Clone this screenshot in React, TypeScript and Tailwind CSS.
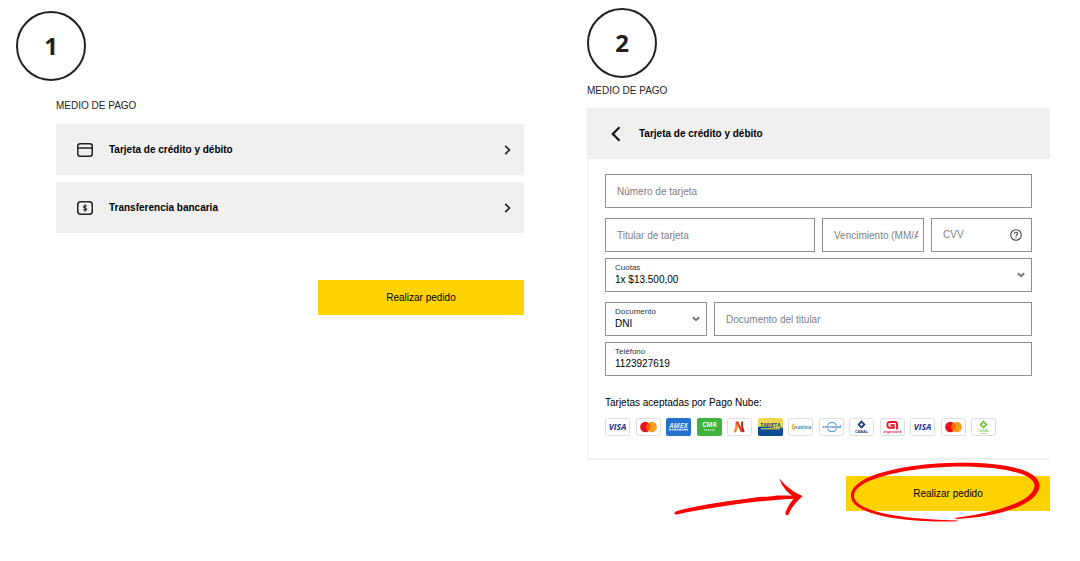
import { useState } from 'react';
import type { ReactNode } from 'react';

const fieldBox = 'h-[34px] border border-[#8f8f8f] bg-white';
const textInput =
  'w-full min-w-0 rounded-none pl-[11px] pr-[5px] text-[10px] leading-[14px] text-black placeholder:text-[#808080] outline-none';

function StepBadge({ step }: { step: number }) {
  return (
    <div className="flex size-[70px] items-center justify-center rounded-full border-2 border-[#231f20] font-['Open_Sans',sans-serif] text-2xl font-bold text-[#231f20]">
      {step}
    </div>
  );
}

function CardIcon() {
  return (
    <svg width="16" height="14" viewBox="0 0 16 14" fill="none" stroke="#222" strokeWidth="1.5">
      <rect x="0.75" y="0.75" width="14.5" height="12.5" rx="2.5" />
      <path d="M1 5h14" />
    </svg>
  );
}

function TransferIcon() {
  return (
    <svg width="16" height="14" viewBox="0 0 16 14" fill="none" stroke="#222" strokeWidth="1.5">
      <rect x="0.75" y="0.75" width="14.5" height="12.5" rx="3" />
      <path d="M9.6 5.2C9.2 4.5 6.6 4.3 6.6 5.8c0 1.4 3 .9 3 2.4 0 1.4-2.7 1.3-3.2.4M8 3.4v7.2" strokeWidth="1.1" />
    </svg>
  );
}

function ChevronRight() {
  return (
    <svg width="7" height="10" viewBox="0 0 7 10" fill="none" stroke="#222" strokeWidth="1.7">
      <path d="M1.2 0.8 5.4 5 1.2 9.2" />
    </svg>
  );
}

function SelectArrow() {
  return (
    <svg
      className="pointer-events-none absolute right-[6px] top-1/2 -translate-y-1/2"
      width="8"
      height="6"
      viewBox="0 0 8 6"
      fill="none"
      stroke="#777"
      strokeWidth="2"
    >
      <path d="M0.8 1.2 4 4.2 7.2 1.2" />
    </svg>
  );
}

function LabeledField({ id, label, children }: { id: string; label: string; children: ReactNode }) {
  return (
    <div className={`${fieldBox} relative flex flex-col pl-[9px] pt-1`}>
      <label htmlFor={id} className="text-[8px] leading-[10px] text-[#333]">
        {label}
      </label>
      {children}
    </div>
  );
}

function PaymentOption({ icon, label }: { icon: ReactNode; label: string }) {
  return (
    <button type="button" className="flex h-[51px] w-full items-center bg-[#f0f0f0] pl-[21px] pr-[13px] text-left">
      {icon}
      <span className="ml-4 flex-1 text-[10px] font-bold text-black">{label}</span>
      <ChevronRight />
    </button>
  );
}

const logos: Record<string, ReactNode> = {
  visa: (
    <text x="12.5" y="12" textAnchor="middle" fontSize="8.5" fontWeight="bold" fontStyle="italic" fill="#1f2f86">
      VISA
    </text>
  ),
  mastercard: (
    <>
      <circle cx="9.3" cy="9" r="5.2" fill="#eb101b" />
      <circle cx="15.7" cy="9" r="5.2" fill="#f79e1b" />
      <path d="M12.5 4.9a5.2 5.2 0 0 1 0 8.2a5.2 5.2 0 0 1 0-8.2" fill="#ff5f00" />
    </>
  ),
  amex: (
    <>
      <rect width="25" height="18" rx="2" fill="#2470ce" />
      <text x="12.5" y="10" textAnchor="middle" fontSize="7" fontWeight="bold" fontStyle="italic" fill="#d5e8ff">
        AMEX
      </text>
      <path d="M3 11.6h19" stroke="#cfe3fb" strokeWidth="1.6" strokeDasharray="2 0.5" />
    </>
  ),
  cmr: (
    <>
      <rect width="25" height="18" rx="2" fill="#3fb43c" />
      <text x="12.5" y="9.4" textAnchor="middle" fontSize="6.5" fontWeight="bold" fill="#e9f9e4">
        CMR
      </text>
      <path d="M7 12h11" stroke="#b5e5b0" strokeWidth="1.4" strokeDasharray="1.4 0.5" />
    </>
  ),
  naranja: (
    <>
      <path d="M7.6 14c1.8-2.6 2.2-6 1.8-9.5" fill="none" stroke="#f08322" strokeWidth="2.2" />
      <path d="M8.6 3.4 11 3.2 16.6 14h-2.8Z" fill="#dd4024" />
      <path d="M15 3.6c-.4 4 .1 7 1.8 10.4" fill="none" stroke="#b62b26" strokeWidth="2" />
    </>
  ),
  shopping: (
    <>
      <rect width="25" height="18" rx="2" fill="#f0d651" />
      <path d="M0 9C8 8 17 11 25 9.500V16a2 2 0 0 1-2 2H2a2 2 0 0 1-2-2Z" fill="#0c4c91" />
      <text x="12.5" y="9" textAnchor="middle" fontSize="5" fontWeight="bold" fill="#174b78">
        TARJETA
      </text>
      <path d="M3 10.8h19" stroke="#d8d35c" strokeWidth="1.6" strokeDasharray="1.6 0.5" />
    </>
  ),
  nativa: (
    <>
      <path d="M6.2 6a3.3 3.3 0 0 0 0 6" fill="none" stroke="#e8bd35" strokeWidth="1.7" />
      <text x="14.5" y="10.8" textAnchor="middle" fontSize="5.5" fontWeight="bold" fill="#5788aa">
        nativa
      </text>
    </>
  ),
  cencosud: (
    <>
      <circle cx="13" cy="9" r="4.7" fill="none" stroke="#5ba2d6" strokeWidth="1.3" />
      <rect x="3.5" y="7.6" width="18.5" height="2.8" fill="#fff" />
      <text x="12.7" y="10.3" textAnchor="middle" fontSize="4" fontWeight="bold" fill="#2879bd">
        cencosud
      </text>
    </>
  ),
  cabal: (
    <>
      <path d="M12.5 3.6 15.4 6.500 12.500 9.400 9.600 6.500Z" fill="none" stroke="#1e3d7b" strokeWidth="1.8" />
      <text x="12.5" y="15" textAnchor="middle" fontSize="4" fontWeight="bold" fill="#29457f">
        CABAL
      </text>
    </>
  ),
  argencard: (
    <>
      <path
        d="M17 11.4V6a2 2 0 0 0-2-2H9.500a2 2 0 0 0-2 2v1.800a2 2 0 0 0 2 2h4.200V7.200h-3.200"
        fill="none"
        stroke="#e31b2d"
        strokeWidth="1.9"
      />
      <text x="12.5" y="15" textAnchor="middle" fontSize="3.5" fontWeight="bold" fill="#d33a48">
        argencard
      </text>
    </>
  ),
  cabalDebito: (
    <>
      <path d="M12.5 3.6 15.4 6.500 12.500 9.400 9.600 6.500Z" fill="none" stroke="#7cc142" strokeWidth="1.8" />
      <text x="12.5" y="14" textAnchor="middle" fontSize="4" fill="#79bd48">
        CABAL
      </text>
      <path d="M9 15.5h7" stroke="#b5dc96" strokeWidth="0.8" />
    </>
  ),
};

const acceptedCards = [
  'visa',
  'mastercard',
  'amex',
  'cmr',
  'naranja',
  'shopping',
  'nativa',
  'cencosud',
  'cabal',
  'argencard',
  'visa',
  'mastercard',
  'cabalDebito',
];

function CardLogo({ name }: { name: string }) {
  return (
    <svg width="25" height="18" viewBox="0 0 25 18" className="font-['Open_Sans',sans-serif]">
      <rect x="0.5" y="0.5" width="24" height="17" rx="2" fill="#fff" stroke="#dedede" />
      {logos[name]}
    </svg>
  );
}

// Hand drawn arrow and circle around the submit button
function Highlight() {
  return (
    <svg
      className="pointer-events-none absolute -top-5 right-0"
      width="380"
      height="72"
      viewBox="0 0 380 72"
      fill="#ff0000"
    >
      <path d="M4.3 58C4.3 56 6 55.2 8 54.7C30 49 58 45 84 41.8C92 40 96 41.3 102 40.2C110 39 120 40 131.7 39.5C130 43.5 121 42.6 112 43.5C84 45.5 48 50.5 21 55.5C15 56.5 10 58.2 6 58.6Z" />
      <path d="M109.3 22.3C114 29 124 36.5 132.5 40.2C126 46 121 52 118.5 58.5C117.5 60 114.5 59 115.5 56.5C118 50 121 45 125 41.5C118 38 111.5 30 109.3 22.3Z" />
      <path d="M287.7 65.2C240 67 181 60 181 40C181 18 240 6.7 292 6.7C340 6.7 370 15 369.5 30C368 50 325 61 286 63L285 62C325 56.5 363 46 364.5 30C365 17 330 10.5 290 10.5C240 11 184.5 22 184 40C184 56 235 63.5 287.7 64.4Z" />
    </svg>
  );
}

export default function App() {
  const [installments, setInstallments] = useState('1');
  const [docType, setDocType] = useState('DNI');
  const [phone, setPhone] = useState('1123927619');

  return (
    <main className="grid min-h-screen grid-cols-[508fr_463fr] items-start gap-[63px] bg-white pb-8 pl-4 pr-[30px] font-['Liberation_Sans',Arial,sans-serif] text-[10px] text-black">
      {/* Step 1: choose the payment method */}
      <section className="pt-[11px]">
        <StepBadge step={1} />
        <div className="pl-10 pt-[18px]">
          <h2 className="leading-[14px] text-[#222]">MEDIO DE PAGO</h2>
          <div className="mt-[11px] flex flex-col gap-[7px]">
            <PaymentOption icon={<CardIcon />} label="Tarjeta de crédito y débito" />
            <PaymentOption icon={<TransferIcon />} label="Transferencia bancaria" />
          </div>
          <div className="mt-[47px] flex justify-end">
            <button type="button" className="h-[35px] w-[206px] bg-[#ffd200]">
              Realizar pedido
            </button>
          </div>
        </div>
      </section>

      {/* Step 2: card form */}
      <section className="pt-2">
        <StepBadge step={2} />
        <h2 className="mt-[6px] leading-[14px] text-[#222]">MEDIO DE PAGO</h2>
        <div className="mt-[10px]">
          <header className="flex h-[51px] items-center bg-[#f0f0f0] pl-6">
            <button type="button" aria-label="Volver">
              <svg width="10" height="16" viewBox="0 0 10 16" fill="none" stroke="#111" strokeWidth="2.2">
                <path d="M8.5 1.2 1.8 8l6.7 6.8" />
              </svg>
            </button>
            <h3 className="ml-[18px] font-bold">Tarjeta de crédito y débito</h3>
          </header>

          <form className="border-b-2 border-l border-[#f0f0f0] pb-[22px] pl-[17px] pr-[18px] pt-[15px]">
            <input aria-label="Número de tarjeta" placeholder="Número de tarjeta" className={`${fieldBox} ${textInput} block`} />
            <div className="mt-[10px] grid grid-cols-[210fr_102fr_101fr] gap-[7px]">
              <input aria-label="Titular de tarjeta" placeholder="Titular de tarjeta" className={`${fieldBox} ${textInput}`} />
              <input aria-label="Vencimiento" placeholder="Vencimiento (MM/AA)" className={`${fieldBox} ${textInput}`} />
              <div className={`${fieldBox} flex items-center pr-[9px]`}>
                <input aria-label="CVV" placeholder="CVV" className={textInput} />
                <svg className="shrink-0" width="12" height="12" viewBox="0 0 12 12" fill="none" stroke="#444" strokeWidth="1.1">
                  <circle cx="6" cy="6" r="5.3" />
                  <path d="M4.4 4.9c0-2.2 3.3-2 3.2 0C7.5 6 6 6 6 7.2M6 8.2v1.1" />
                </svg>
              </div>
            </div>

            <div className="mt-[6px]">
              <LabeledField id="cuotas" label="Cuotas">
                <select
                  id="cuotas"
                  value={installments}
                  onChange={(e) => setInstallments(e.target.value)}
                  className="w-full appearance-none leading-[14px] outline-none"
                >
                  <option value="1">1x $13.500,00</option>
                </select>
                <SelectArrow />
              </LabeledField>
            </div>

            <div className="mt-[10px] grid grid-cols-[102fr_318fr] gap-[7px]">
              <LabeledField id="documento" label="Documento">
                <select
                  id="documento"
                  value={docType}
                  onChange={(e) => setDocType(e.target.value)}
                  className="w-full appearance-none leading-[14px] outline-none"
                >
                  <option value="DNI">DNI</option>
                </select>
                <SelectArrow />
              </LabeledField>
              <input aria-label="Documento del titular" placeholder="Documento del titular" className={`${fieldBox} ${textInput}`} />
            </div>

            <div className="mt-[6px]">
              <LabeledField id="telefono" label="Teléfono">
                <input
                  id="telefono"
                  type="tel"
                  value={phone}
                  onChange={(e) => setPhone(e.target.value)}
                  className="w-full leading-[14px] outline-none"
                />
              </LabeledField>
            </div>

            <p className="mt-5 leading-[14px]">Tarjetas aceptadas por Pago Nube:</p>
            <div className="mt-2 flex max-w-[391px] justify-between">
              {acceptedCards.map((name, i) => (
                <CardLogo key={i} name={name} />
              ))}
            </div>
          </form>
        </div>

        <div className="relative mt-4 flex justify-end">
          <button type="button" className="h-[35px] w-[204px] bg-[#ffd200]">
            Realizar pedido
          </button>
          <Highlight />
        </div>
      </section>
    </main>
  );
}
